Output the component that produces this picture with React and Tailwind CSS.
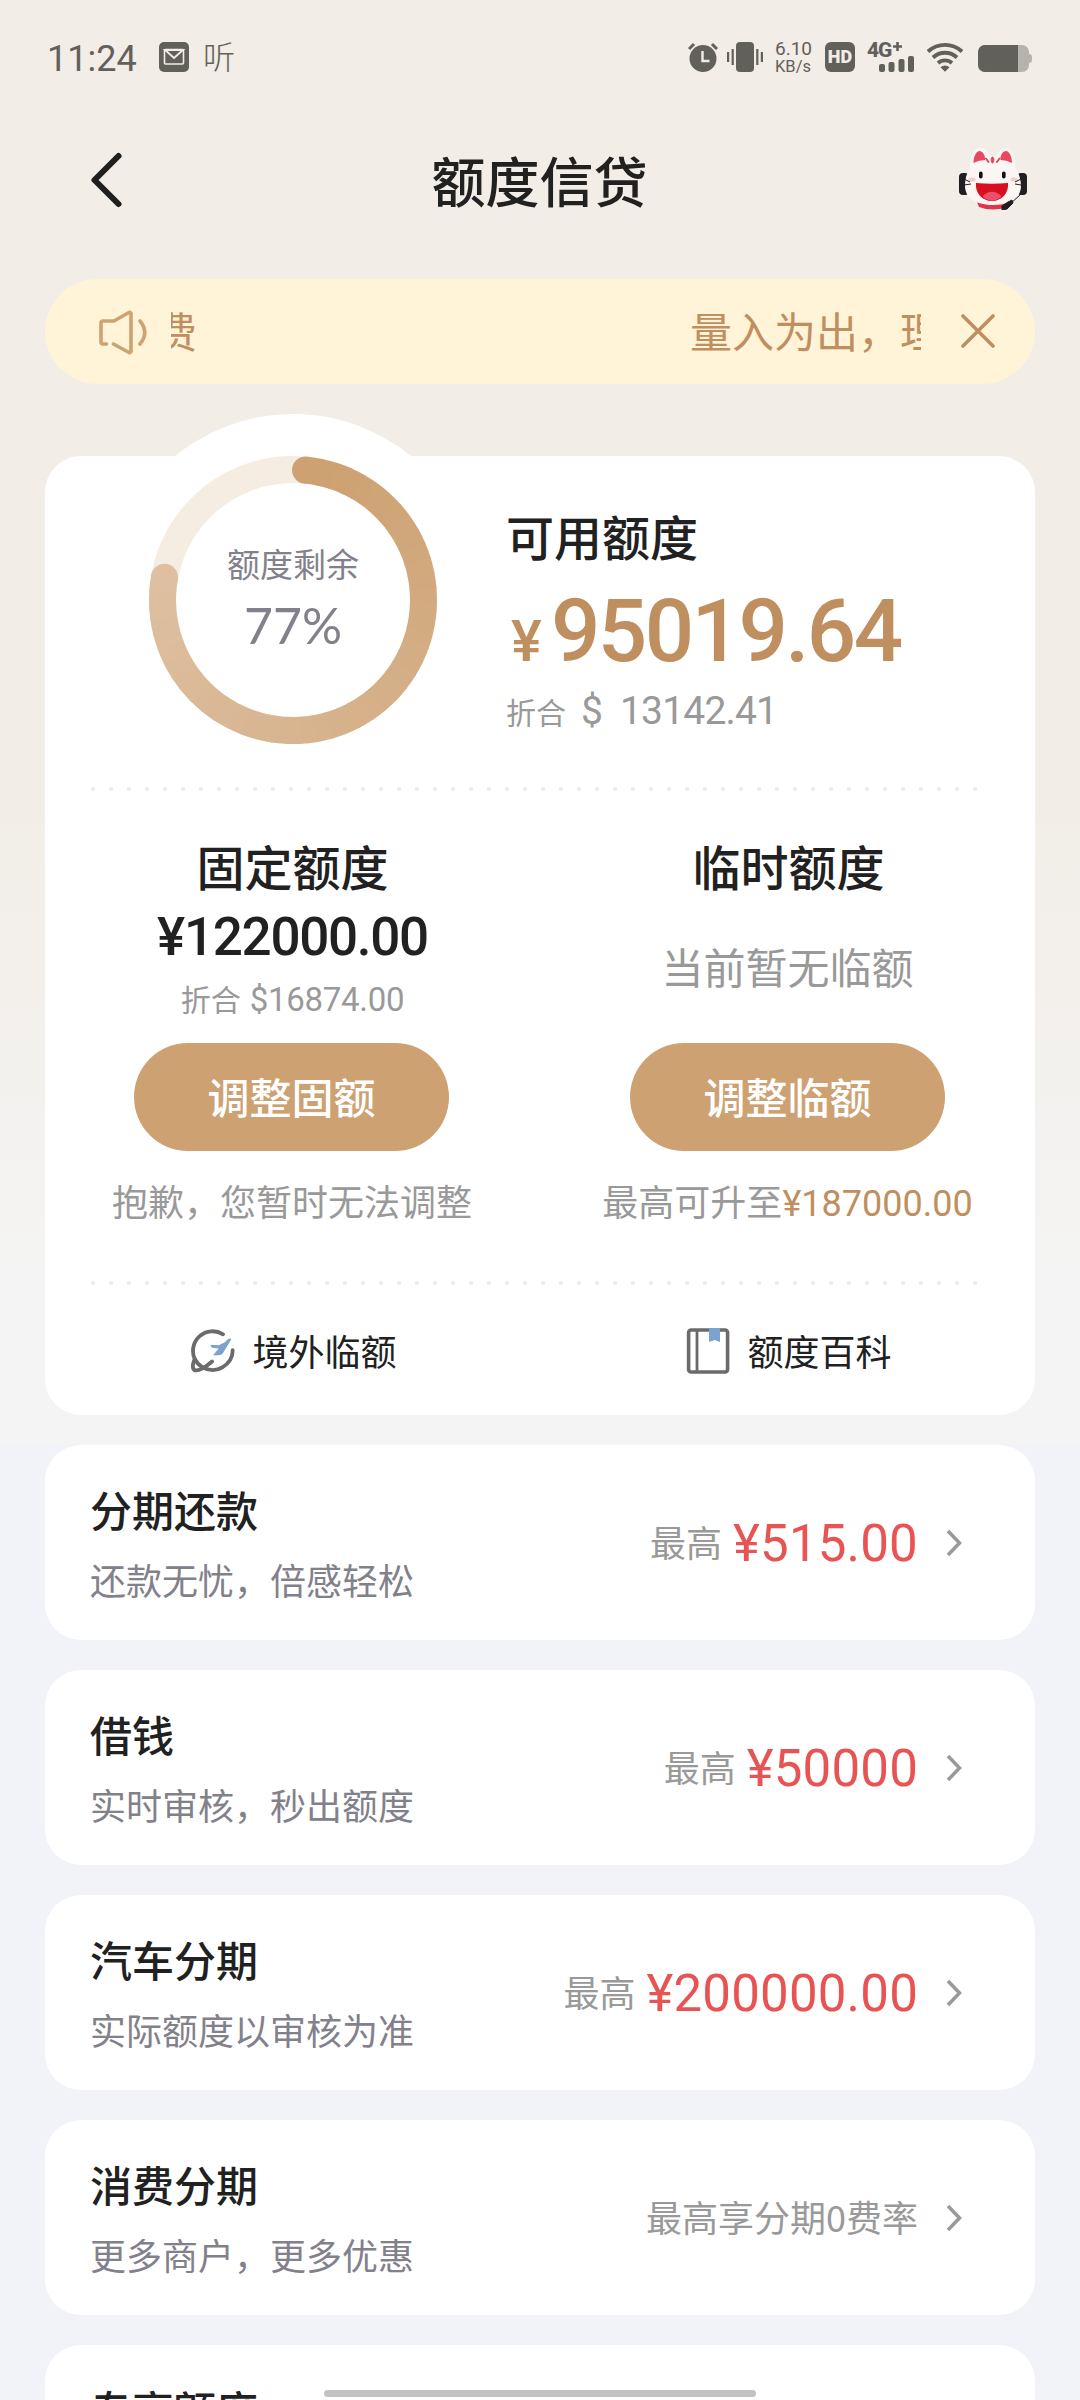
import React from "react";

const rows = [
  { title: "分期还款", desc: "还款无忧，倍感轻松", label: "最高", amount: "¥515.00" },
  { title: "借钱", desc: "实时审核，秒出额度", label: "最高", amount: "¥50000" },
  { title: "汽车分期", desc: "实际额度以审核为准", label: "最高", amount: "¥200000.00" },
  { title: "消费分期", desc: "更多商户，更多优惠", label: "最高享分期0费率" },
  { title: "专享额度", desc: "" },
];

// point on the ring, angle is clockwise from the top
const ringPoint = (deg) => {
  const a = ((deg - 90) * Math.PI) / 180;
  return [186 + 130.5 * Math.cos(a), 186 + 130.5 * Math.sin(a)];
};

const mix = (from, to, t) => from.map((c, i) => Math.round(c + (to[i] - c) * t));

function StatusBar() {
  return (
    <div className="flex h-[114px] items-start justify-between pl-[47px] pr-[48px] pt-[42px] text-[#62605b]">
      <div className="flex items-start">
        <span className="font-[Roboto] text-[36px] leading-[35px] w-[112px]">11:24</span>
        <svg width="30" height="30" viewBox="0 0 30 30">
          <rect width="30" height="30" rx="5" fill="#62605b" />
          <rect x="5.5" y="7.5" width="19" height="14.5" rx="1" fill="none" stroke="#f2ede6" strokeWidth="1.6" />
          <path d="M6 8h18l-9 8z" fill="#62605b" stroke="#f2ede6" strokeWidth="1.8" />
        </svg>
        <span className="ml-[14px] text-[32px] font-light leading-[26px]">听</span>
      </div>
      <div className="flex items-start">
        <svg width="30" height="30" viewBox="0 0 30 30">
          <circle cx="15" cy="16.5" r="13.5" fill="#62605b" />
          <path d="M1 7l5-5M29 7l-5-5" stroke="#62605b" strokeWidth="3" />
          <path d="M14.5 9v10h7" fill="none" stroke="#f2ede6" strokeWidth="2.4" />
        </svg>
        <svg className="ml-[9px]" width="36" height="30" viewBox="0 0 36 30" fill="#62605b">
          <rect x="9" width="18" height="30" rx="4" />
          <rect x="4.6" y="7" width="2.2" height="16" />
          <rect x="0" y="10" width="2.2" height="10" />
          <rect x="29.2" y="7" width="2.2" height="16" />
          <rect x="33.8" y="10" width="2.2" height="10" />
        </svg>
        <div className="ml-[12px] mt-[-1px] w-[38px] font-[Roboto]">
          <div className="text-[19px] leading-[16px]">6.10</div>
          <div className="text-[16.5px] leading-[19px]">KB/s</div>
        </div>
        <div className="ml-[12px] flex h-[30px] w-[30px] items-center justify-center rounded-[6px] bg-[#62605b] font-[Roboto] text-[18px] font-black leading-none text-[#f2ede6]">
          HD
        </div>
        <div className="relative ml-[12px] h-[30px] w-[48px]">
          <span className="absolute left-0 top-0 font-[Roboto] text-[21px] font-extrabold leading-[16px] tracking-[-1px]">4G</span>
          <svg className="absolute left-0 top-0" width="48" height="30" viewBox="0 0 48 30" fill="#62605b">
            <path d="M26 4.5h9M30.500 0v9" stroke="#62605b" strokeWidth="2.6" />
            <rect x="12" y="22" width="6" height="8" rx="2" />
            <rect x="21.500" y="20" width="6" height="10" rx="2" />
            <rect x="31.500" y="17" width="6" height="13" rx="2" />
            <rect x="41" y="14" width="6" height="16" rx="2" />
          </svg>
        </div>
        <svg className="ml-[12px]" width="36" height="30" viewBox="0 0 36 30" fill="none" stroke="#62605b" strokeWidth="3.8">
          <path d="M1 9.500a25 25 0 0 1 34 0" />
          <path d="M6 15.500a17.500 17.500 0 0 1 24 0" />
          <path d="M11 21a10.500 10.500 0 0 1 14 0" />
          <path d="M13.500 25.200a6.500 6.500 0 0 1 9 0L18 29.700z" fill="#62605b" stroke="none" />
        </svg>
        <div className="ml-[15px] mt-[3px] flex items-center">
          <div className="h-[27px] w-[51px] overflow-hidden rounded-[7px] bg-[#b6b3ae]">
            <div className="h-full w-[40px] bg-[#62605b]" />
          </div>
          <div className="h-[9px] w-[3px] rounded-r-sm bg-[#b6b3ae]" />
        </div>
      </div>
    </div>
  );
}

function Mascot() {
  return (
    <svg width="68" height="62" viewBox="0 0 68 62">
      <rect x="0" y="25" width="10" height="22" rx="4" fill="#1f1f21" />
      <rect x="58" y="25" width="10" height="22" rx="4" fill="#1f1f21" />
      <path d="M18 54h32l-2 5q-14 5-28 0z" fill="#e0354d" />
      <path
        d="M11 20C11 8 15 0 21 0c5 0 8 4 9 8h8c1-4 4-8 9-8 6 0 9 8 9 19 4 6 6 13 6 19 0 13-13 19-28 19S6 51 6 38c0-6 1-12 5-18z"
        fill="#fbf6f4"
      />
      <path d="M14.500 15c0-7 3-12 6-12s6 4 5.500 9q-6 0-11.500 3z" fill="#e8475c" />
      <path d="M53 15c0-7-3-12-6-12s-6 4-5.500 9q6 0 11.500 3z" fill="#e8475c" />
      <path d="M33.500 9c2 0 1.500 6 0 6s-2-6 0-6z" fill="#e0485a" stroke="#e0485a" />
      <path d="M27 10.500l2.500 3.500M40.500 10.500L38 14" stroke="#e0485a" strokeWidth="2" strokeLinecap="round" />
      <ellipse cx="13" cy="31.500" rx="3.500" ry="2" fill="#f9c9cb" />
      <ellipse cx="55" cy="31.500" rx="3.500" ry="2" fill="#f9c9cb" />
      <rect x="20" y="23.500" width="3.600" height="7" rx="1.800" fill="#111" />
      <rect x="43" y="23.500" width="3.600" height="7" rx="1.800" fill="#111" />
      <path d="M17 35q16 1.500 32 0c1 10-6 18-16 18S16 45 17 35z" fill="#d70f20" />
      <path d="M23.500 48.500c5-6.500 14-6.500 19 0-5 5.500-14 5.500-19 0z" fill="#e8506a" />
      <path d="M5 31l6 3M5 37l7-1M62 31l-6 3M62 37l-6-1M62 46L50 57" stroke="#1f1f21" strokeWidth="1" fill="none" />
      <path d="M43 58l6-4 4-2 1 3-6 6-5 1z" fill="#1f1f21" stroke="#1f1f21" strokeWidth="1" />
    </svg>
  );
}

function NoticeBar() {
  return (
    <div className="mx-[45px] flex h-[105px] items-center rounded-full bg-[#fff4d8] pl-[53px] text-[#bf8f5f]">
      <svg width="50" height="48" viewBox="0 0 50 48" fill="none" stroke="#cfa272" strokeWidth="3.600" strokeLinecap="round" strokeLinejoin="round">
        <path d="M8.500 36H5a2 2 0 0 1-2-2V15a2 2 0 0 1 2-2h11L31 4.500a1.500 1.500 0 0 1 2 1.500v37a1.500 1.500 0 0 1-2 1.500L15.500 36" />
        <path d="M42 13q9.500 11.500 0 23" />
      </svg>
      <div className="mt-[-3px] ml-[23px] flex w-[750px] overflow-hidden whitespace-nowrap text-[42px] leading-[60px]">
        <span className="ml-[-16px] w-[535px] shrink-0">费</span>
        <span>量入为出，理性消费</span>
      </div>
      <svg className="ml-[39px]" width="36" height="36" viewBox="0 0 36 36" stroke="#bf8f5f" strokeWidth="3.600" strokeLinecap="round">
        <path d="M3 2l30 30M33 2L3 32" />
      </svg>
    </div>
  );
}

function QuotaRing() {
  const start = 5.5;
  const end = 280;
  const steps = 45;
  const segments = Array.from({ length: steps }, (_, i) => {
    const a = start + ((end - start) * i) / steps;
    const b = start + ((end - start) * (i + 1)) / steps + (i < steps - 1 ? 0.6 : 0);
    const [x1, y1] = ringPoint(a);
    const [x2, y2] = ringPoint(b);
    return {
      d: `M${x1} ${y1}A130.5 130.5 0 0 1 ${x2} ${y2}`,
      color: `rgb(${mix([205, 161, 113], [222, 192, 162], i / steps).join(",")})`,
    };
  });
  const [sx, sy] = ringPoint(start);
  const [ex, ey] = ringPoint(end);

  return (
    <div className="relative ml-[62px] mt-[-42px] h-[372px] w-[372px] shrink-0 rounded-full bg-white">
      <svg width="372" height="372" viewBox="0 0 372 372" fill="none">
        <circle cx="186" cy="186" r="130.500" stroke="#f5ece2" strokeWidth="27" />
        <circle cx={sx} cy={sy} r="13.500" fill="#cda171" />
        <circle cx={ex} cy={ey} r="13.500" fill="#debfa1" />
        {segments.map((s, i) => (
          <path key={i} d={s.d} stroke={s.color} strokeWidth="27" />
        ))}
      </svg>
      <div className="absolute inset-0 flex flex-col items-center pt-[125px] text-[#82818b]">
        <span className="text-[33px] leading-[48px]">额度剩余</span>
        <span className="mt-[10px] font-[Lato] text-[50px] leading-[56px]">77%</span>
      </div>
    </div>
  );
}

const Dots = () => (
  <div className="mx-[39px] h-[4px] w-[900px] bg-[radial-gradient(circle,#ececee_1.6px,transparent_2.3px)] bg-[length:18px_4px]" />
);

const ArrowRight = () => (
  <svg width="18" height="28" viewBox="0 0 18 28" fill="none" stroke="#999" strokeWidth="3.500">
    <path d="M3 2l11.500 12L3 26" />
  </svg>
);

export default function App() {
  return (
    <div className="relative h-[2400px] w-[1080px] overflow-hidden bg-[#f2f3f8] font-['Noto_Sans_CJK_SC',sans-serif] text-[#212121]">
      <div className="h-[1445px] bg-[linear-gradient(180deg,#f2ede6_0px,#f2ede6_760px,#f4f4f4_1300px)]">
        <StatusBar />

        {/* Header */}
        <div className="flex h-[165px] items-start justify-between pl-[88px] pr-[53px]">
          <svg className="mt-[36px]" width="36" height="60" viewBox="0 0 36 60" fill="none" stroke="#1f1f1f" strokeWidth="6" strokeLinecap="round" strokeLinejoin="round">
            <path d="M30.500 6L6.500 30l24 24" />
          </svg>
          <h1 className="mt-[26px] ml-[-4px] text-[54px] font-medium leading-[80px]">额度信贷</h1>
          <div className="mt-[34px]">
            <Mascot />
          </div>
        </div>

        <NoticeBar />

        {/* Quota card */}
        <div className="mx-[45px] mt-[72px] h-[959px] rounded-[36px] bg-white">
          <div className="flex h-[331px]">
            <QuotaRing />
            <div className="ml-[27px] pt-[49px]">
              <div className="text-[48px] font-medium leading-[60px]">可用额度</div>
              <div className="mt-[16px] flex h-[100px] items-baseline font-[Roboto] leading-[100px] text-[#bf8f5f]">
                <span className="w-[45px] pl-[5px] text-[58px] font-medium">¥</span>
                <span className="text-[87px] font-medium tracking-[-2.6px]">95019.64</span>
              </div>
              <div className="mt-[6px] flex items-baseline leading-[48px] text-[#999]">
                <span className="text-[30px]">折合</span>
                <span className="ml-[15px] font-[Roboto] text-[39px]">$</span>
                <span className="ml-[17px] font-[Roboto] text-[39px] tracking-[-0.8px]">13142.41</span>
              </div>
            </div>
          </div>

          <Dots />

          <div className="grid h-[490px] grid-cols-2">
            <div className="flex flex-col items-center pt-[44px]">
              <div className="text-[48px] font-medium leading-[60px]">固定额度</div>
              <div className="mt-[12px] font-[Roboto] text-[53px] font-medium leading-[60px] tracking-[-1.3px]">¥122000.00</div>
              <div className="mt-[10px] flex h-[42px] items-baseline leading-[42px] text-[#999]">
                <span className="text-[30px]">折合</span>
                <span className="ml-[9px] font-[Roboto] text-[33px] tracking-[-0.3px]">$16874.00</span>
              </div>
              <button className="mt-[24px] mr-[2px] h-[108px] w-[315px] shrink-0 rounded-full bg-[#cda171] pb-[3px] text-[42px] font-medium text-white">
                调整固额
              </button>
              <div className="mt-[24px] mr-[1px] text-[36px] leading-[50px] text-[#999]">抱歉，您暂时无法调整</div>
            </div>
            <div className="flex flex-col items-center pt-[44px]">
              <div className="ml-[2px] text-[48px] font-medium leading-[60px]">临时额度</div>
              <div className="mt-[41px] h-[107px] text-[42px] leading-[60px] text-[#999]">当前暂无临额</div>
              <button className="h-[108px] w-[315px] shrink-0 rounded-full bg-[#cda171] pb-[3px] text-[42px] font-medium text-white">
                调整临额
              </button>
              <div className="mt-[24px] flex text-[36px] leading-[50px] text-[#999]">
                最高可升至
                <span className="mt-[4px] font-[Roboto] text-[#bf8f5f]">¥187000.00</span>
              </div>
            </div>
          </div>

          <Dots />

          <div className="grid h-[132px] grid-cols-2 text-[36px]">
            <div className="flex items-center justify-center gap-[17px] pl-[3px]">
              <svg width="44" height="44" viewBox="0 0 46 46" fill="none" stroke="#6b6b6b" strokeWidth="4" strokeLinecap="round" strokeLinejoin="round">
                <path d="M33.500 5.500A20.500 20.500 0 0 0 4 31.500" />
                <path d="M4 31.500c-2 4-3 9-.5 11.500C8 44.500 15 40 22 34" />
                <path d="M4 31.500Q6 36 12 40q11 6 21 0 11-7 10.500-18" />
                <path
                  d="M42 11l-9 15q-1.500 1.500-4 1.500h-6l6-7-7-1-2-3 9 .5 6-3 4-3.500q3-1.500 3 1z"
                  fill="#7ba3d0"
                  stroke="none"
                />
              </svg>
              <span className="mt-[-3px]">境外临额</span>
            </div>
            <div className="flex items-center justify-center gap-[17px] pl-[3px]">
              <svg width="44" height="46" viewBox="0 0 44 46" fill="none" stroke="#6b6b6b" strokeWidth="3.600">
                <rect x="2.600" y="2" width="39" height="42" rx="2.500" />
                <path d="M11 2v42" strokeWidth="2.800" />
                <path d="M23 0h11v14l-5.500-2L23 14z" fill="#7ba3d0" stroke="none" />
              </svg>
              <span className="mt-[-3px]">额度百科</span>
            </div>
          </div>
        </div>
      </div>

      {/* Product list */}
      <div className="mx-[45px] space-y-[30px]">
        {rows.map((row) => (
          <div key={row.title} className="flex h-[195px] items-center justify-between rounded-[36px] bg-white pl-[45px] pr-[72px]">
            <div className="flex h-full flex-col pt-[34px]">
              <span className="text-[42px] font-medium leading-[60px]">{row.title}</span>
              <span className="mt-[12px] text-[36px] leading-[56px] text-[#82818b]">{row.desc}</span>
            </div>
            <div className="flex items-center">
              <span className="mt-[-4px] text-[36px] text-[#999]">{row.label}</span>
              {row.amount && (
                <span className="mt-[3px] ml-[11px] font-[Roboto] text-[51px] leading-[60px] tracking-[0.2px] text-[#e85454]">{row.amount}</span>
              )}
              <span className="ml-[27px]">
                <ArrowRight />
              </span>
            </div>
          </div>
        ))}
      </div>

      <div className="absolute bottom-[3px] left-[324px] h-[7px] w-[432px] rounded-full bg-[#c2c2c2]" />
    </div>
  );
}
